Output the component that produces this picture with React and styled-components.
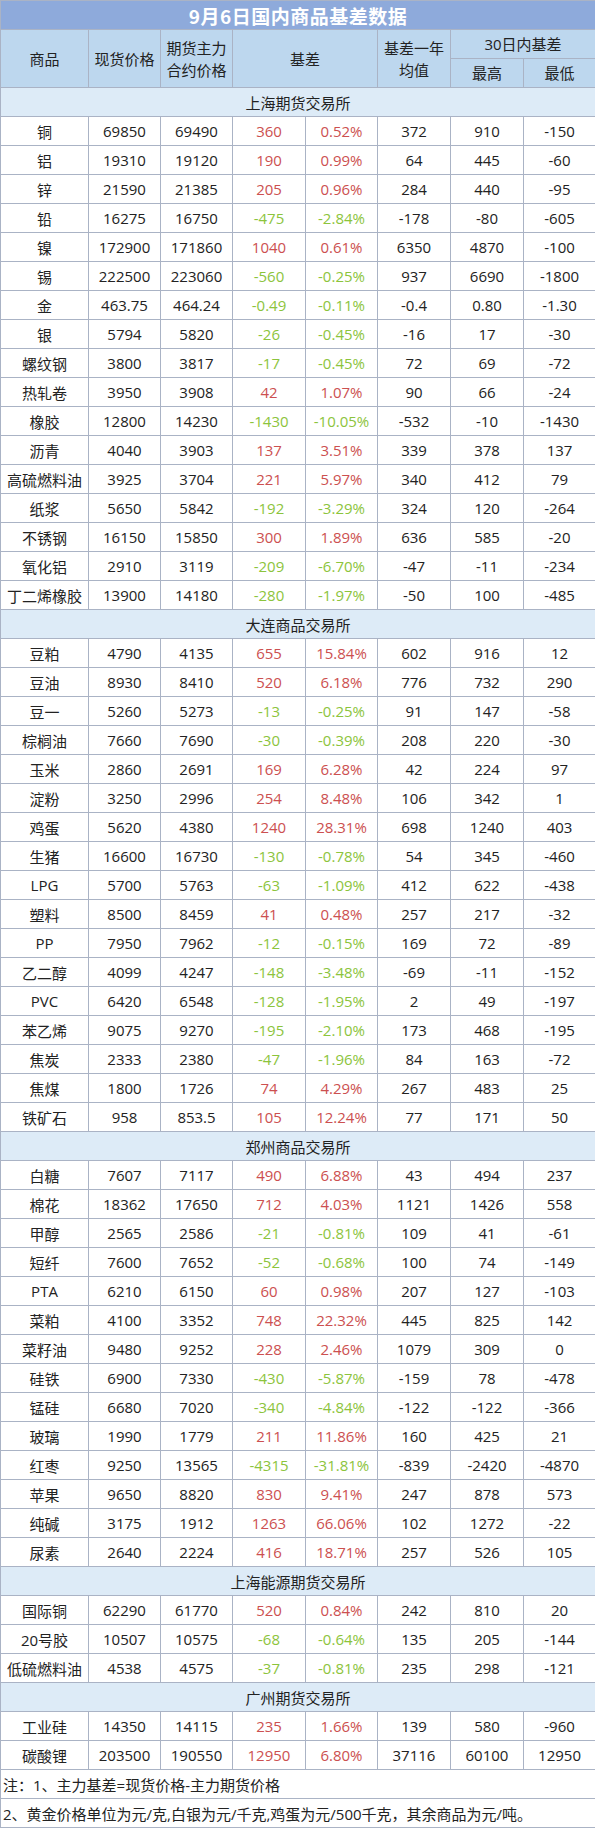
import React from 'react';
import styled, { createGlobalStyle } from 'styled-components';

const GlobalStyle = createGlobalStyle`
	body {
		margin: 0;
		background: #fff;
		font-family: "Open Sans", "Noto Sans CJK SC", sans-serif;
	}
`;

const widths = [88, 72, 72, 73, 72, 73, 73, 72];

const sections = [
	{
		name: '上海期货交易所',
		rows: [
			['铜', '69850', '69490', '360', '0.52%', '372', '910', '-150'],
			['铝', '19310', '19120', '190', '0.99%', '64', '445', '-60'],
			['锌', '21590', '21385', '205', '0.96%', '284', '440', '-95'],
			['铅', '16275', '16750', '-475', '-2.84%', '-178', '-80', '-605'],
			['镍', '172900', '171860', '1040', '0.61%', '6350', '4870', '-100'],
			['锡', '222500', '223060', '-560', '-0.25%', '937', '6690', '-1800'],
			['金', '463.75', '464.24', '-0.49', '-0.11%', '-0.4', '0.80', '-1.30'],
			['银', '5794', '5820', '-26', '-0.45%', '-16', '17', '-30'],
			['螺纹钢', '3800', '3817', '-17', '-0.45%', '72', '69', '-72'],
			['热轧卷', '3950', '3908', '42', '1.07%', '90', '66', '-24'],
			['橡胶', '12800', '14230', '-1430', '-10.05%', '-532', '-10', '-1430'],
			['沥青', '4040', '3903', '137', '3.51%', '339', '378', '137'],
			['高硫燃料油', '3925', '3704', '221', '5.97%', '340', '412', '79'],
			['纸浆', '5650', '5842', '-192', '-3.29%', '324', '120', '-264'],
			['不锈钢', '16150', '15850', '300', '1.89%', '636', '585', '-20'],
			['氧化铝', '2910', '3119', '-209', '-6.70%', '-47', '-11', '-234'],
			['丁二烯橡胶', '13900', '14180', '-280', '-1.97%', '-50', '100', '-485'],
		],
	},
	{
		name: '大连商品交易所',
		rows: [
			['豆粕', '4790', '4135', '655', '15.84%', '602', '916', '12'],
			['豆油', '8930', '8410', '520', '6.18%', '776', '732', '290'],
			['豆一', '5260', '5273', '-13', '-0.25%', '91', '147', '-58'],
			['棕榈油', '7660', '7690', '-30', '-0.39%', '208', '220', '-30'],
			['玉米', '2860', '2691', '169', '6.28%', '42', '224', '97'],
			['淀粉', '3250', '2996', '254', '8.48%', '106', '342', '1'],
			['鸡蛋', '5620', '4380', '1240', '28.31%', '698', '1240', '403'],
			['生猪', '16600', '16730', '-130', '-0.78%', '54', '345', '-460'],
			['LPG', '5700', '5763', '-63', '-1.09%', '412', '622', '-438'],
			['塑料', '8500', '8459', '41', '0.48%', '257', '217', '-32'],
			['PP', '7950', '7962', '-12', '-0.15%', '169', '72', '-89'],
			['乙二醇', '4099', '4247', '-148', '-3.48%', '-69', '-11', '-152'],
			['PVC', '6420', '6548', '-128', '-1.95%', '2', '49', '-197'],
			['苯乙烯', '9075', '9270', '-195', '-2.10%', '173', '468', '-195'],
			['焦炭', '2333', '2380', '-47', '-1.96%', '84', '163', '-72'],
			['焦煤', '1800', '1726', '74', '4.29%', '267', '483', '25'],
			['铁矿石', '958', '853.5', '105', '12.24%', '77', '171', '50'],
		],
	},
	{
		name: '郑州商品交易所',
		rows: [
			['白糖', '7607', '7117', '490', '6.88%', '43', '494', '237'],
			['棉花', '18362', '17650', '712', '4.03%', '1121', '1426', '558'],
			['甲醇', '2565', '2586', '-21', '-0.81%', '109', '41', '-61'],
			['短纤', '7600', '7652', '-52', '-0.68%', '100', '74', '-149'],
			['PTA', '6210', '6150', '60', '0.98%', '207', '127', '-103'],
			['菜粕', '4100', '3352', '748', '22.32%', '445', '825', '142'],
			['菜籽油', '9480', '9252', '228', '2.46%', '1079', '309', '0'],
			['硅铁', '6900', '7330', '-430', '-5.87%', '-159', '78', '-478'],
			['锰硅', '6680', '7020', '-340', '-4.84%', '-122', '-122', '-366'],
			['玻璃', '1990', '1779', '211', '11.86%', '160', '425', '21'],
			['红枣', '9250', '13565', '-4315', '-31.81%', '-839', '-2420', '-4870'],
			['苹果', '9650', '8820', '830', '9.41%', '247', '878', '573'],
			['纯碱', '3175', '1912', '1263', '66.06%', '102', '1272', '-22'],
			['尿素', '2640', '2224', '416', '18.71%', '257', '526', '105'],
		],
	},
	{
		name: '上海能源期货交易所',
		rows: [
			['国际铜', '62290', '61770', '520', '0.84%', '242', '810', '20'],
			['20号胶', '10507', '10575', '-68', '-0.64%', '135', '205', '-144'],
			['低硫燃料油', '4538', '4575', '-37', '-0.81%', '235', '298', '-121'],
		],
	},
	{
		name: '广州期货交易所',
		rows: [
			['工业硅', '14350', '14115', '235', '1.66%', '139', '580', '-960'],
			['碳酸锂', '203500', '190550', '12950', '6.80%', '37116', '60100', '12950'],
		],
	},
];

const notes = [
	'注：1、主力基差=现货价格-主力期货价格',
	'2、黄金价格单位为元/克,白银为元/千克,鸡蛋为元/500千克，其余商品为元/吨。',
];

export default function App() {
	return (
		<>
			<GlobalStyle />
			<Table>
				<colgroup>
					{widths.map((w, i) => (
						<col key={i} style={{ width: w }} />
					))}
				</colgroup>
				<thead>
					<tr>
						<Title colSpan={8}>9月6日国内商品基差数据</Title>
					</tr>
					<tr>
						<Head rowSpan={2}>商品</Head>
						<Head rowSpan={2}>现货价格</Head>
						<Head rowSpan={2}>
							期货主力
							<br />
							合约价格
						</Head>
						<Head rowSpan={2} colSpan={2}>
							基差
						</Head>
						<Head rowSpan={2}>
							基差一年
							<br />
							均值
						</Head>
						<Head colSpan={2}>30日内基差</Head>
					</tr>
					<tr>
						<Head>最高</Head>
						<Head>最低</Head>
					</tr>
				</thead>
				<tbody>
					{sections.map((section) => (
						<React.Fragment key={section.name}>
							<tr>
								<Section colSpan={8}>{section.name}</Section>
							</tr>
							{section.rows.map((row) => {
								const tone = row[3].startsWith('-') ? 'down' : 'up';
								return (
									<tr key={row[0]}>
										{row.map((value, i) => (
											<Cell key={i} $tone={i === 3 || i === 4 ? tone : undefined}>
												{value}
											</Cell>
										))}
									</tr>
								);
							})}
						</React.Fragment>
					))}
					{notes.map((note) => (
						<tr key={note}>
							<Note colSpan={8}>{note}</Note>
						</tr>
					))}
				</tbody>
			</Table>
		</>
	);
}

const Table = styled.table`
	width: 595px;
	table-layout: fixed;
	border-collapse: collapse;
	font-size: 15px;
	color: #222;

	td,
	th {
		border: 1px solid #aab3c5;
		padding: 0;
		height: 28px;
		text-align: center;
		white-space: nowrap;
		overflow: hidden;
	}
`;

const Title = styled.th`
	background: #8eaadb;
	color: #fff;
	font-family: "Noto Sans CJK SC", sans-serif;
	font-size: 19px;
	font-weight: 700;
	letter-spacing: 0.5px;
`;

const Head = styled.th`
	background: #bdd7ee;
	font-weight: 400;
	line-height: 22px;
`;

const Section = styled.td`
	background: #ddebf7;
`;

const Cell = styled.td`
	color: ${(p) => (p.$tone === 'up' ? '#cc5050' : p.$tone === 'down' ? '#8cc43c' : '#222')};
`;

const Note = styled.td`
	&& {
		text-align: left;
		padding-left: 2px;
	}
`;
